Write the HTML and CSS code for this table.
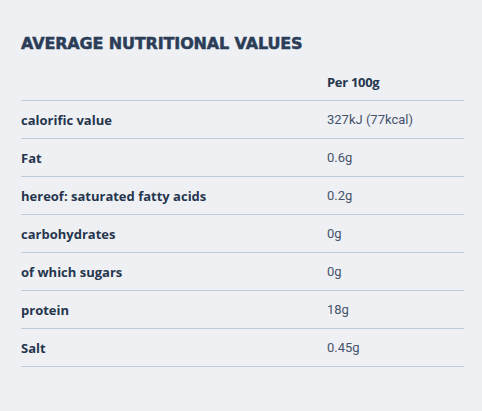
FILE: index.html
```html
<!DOCTYPE html>
<html>
<head>
<meta charset="utf-8">
<link rel="stylesheet" href="styles.css">
</head>
<body>
<section class="panel">
  <h2 class="title">AVERAGE NUTRITIONAL VALUES</h2>
  <table class="nutri">
    <thead>
      <tr><th></th><th>Per 100g</th></tr>
    </thead>
    <tbody>
      <tr><td class="label">calorific value</td><td class="value">327kJ (77kcal)</td></tr>
      <tr><td class="label">Fat</td><td class="value">0.6g</td></tr>
      <tr><td class="label">hereof: saturated fatty acids</td><td class="value">0.2g</td></tr>
      <tr><td class="label">carbohydrates</td><td class="value">0g</td></tr>
      <tr><td class="label">of which sugars</td><td class="value">0g</td></tr>
      <tr><td class="label">protein</td><td class="value">18g</td></tr>
      <tr><td class="label">Salt</td><td class="value">0.45g</td></tr>
    </tbody>
  </table>
</section>
</body>
</html>
```
FILE: styles.css
```css
html, body {
  margin: 0;
  padding: 0;
  background: #eef0f4;
}
body {
  width: 482px;
  height: 411px;
  overflow: hidden;
  font-family: Roboto, "Liberation Sans", sans-serif;
  color: #26364d;
}
.panel {
  padding: 34px 18px 0 21px;
}
.title {
  margin: 0 0 9px 0;
  font-family: "DejaVu Sans", sans-serif;
  font-weight: 900;
  font-size: 16px;
  line-height: 20px;
  letter-spacing: -0.15px;
  -webkit-text-stroke: 0.5px #2b3d57;
  color: #2b3d57;
}
.nutri {
  width: 443px;
  border-collapse: collapse;
}
.nutri th,
.nutri td {
  height: 37px;
  padding: 0;
  border-bottom: 1px solid #bccbdd;
  text-align: left;
  vertical-align: middle;
  font-size: 13px;
}
.nutri th:first-child,
.nutri td.label {
  width: 306px;
}
.nutri th {
  font-family: "Open Sans", sans-serif;
  font-weight: 700;
  letter-spacing: -0.3px;
  color: #26364d;
}
.label {
  font-family: "Open Sans", sans-serif;
  font-weight: 700;
  color: #26364d;
}
.value {
  font-weight: 400;
  color: #46536a;
}
```
